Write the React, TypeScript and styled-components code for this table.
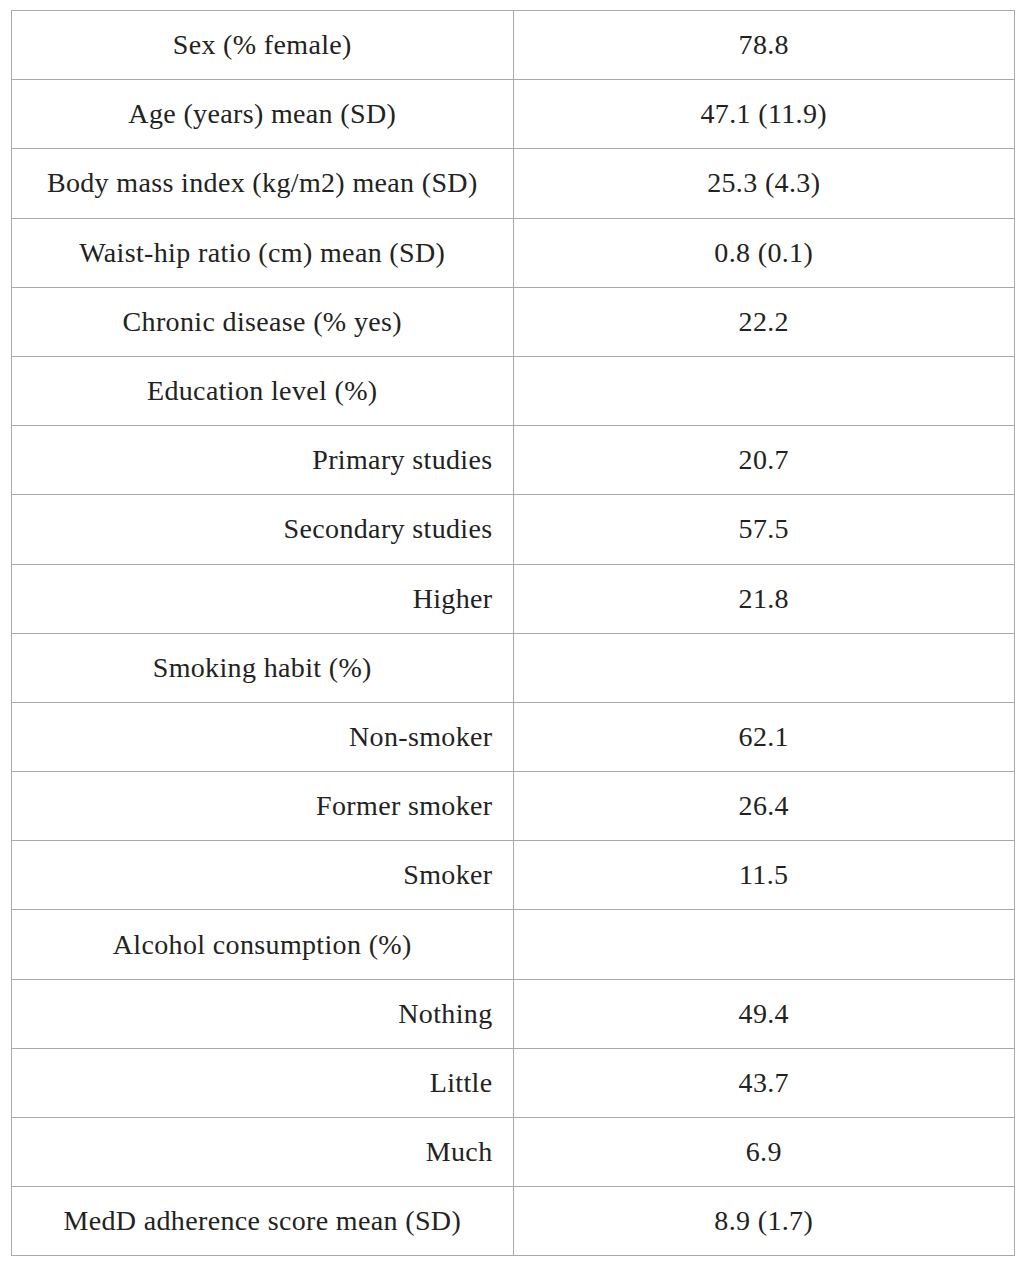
import styled, { createGlobalStyle } from 'styled-components';

const GlobalStyle = createGlobalStyle`
  body {
    margin: 0;
    background: #fff;
  }
`;

const Page = styled.main`
  padding: 10px 11px;
`;

const Table = styled.table`
  width: 1004px;
  border-collapse: collapse;
  font-family: 'Liberation Serif', 'Times New Roman', serif;
  font-size: 28px;
  letter-spacing: 0.35px;
  color: #222;
`;

const Row = styled.tr`
  height: 69.2px;
`;

const Cell = styled.td<{ $indent?: boolean }>`
  border: 1px solid #aaa;
  padding: 0 20px;
  text-align: ${(p) => (p.$indent ? 'right' : 'center')};
  vertical-align: middle;
  width: 50%;
`;

type Item = { label: string; value: string; sub?: boolean };

const rows: Item[] = [
  { label: 'Sex (% female)', value: '78.8' },
  { label: 'Age (years) mean (SD)', value: '47.1 (11.9)' },
  { label: 'Body mass index (kg/m2) mean (SD)', value: '25.3 (4.3)' },
  { label: 'Waist-hip ratio (cm) mean (SD)', value: '0.8 (0.1)' },
  { label: 'Chronic disease (% yes)', value: '22.2' },
  { label: 'Education level (%)', value: '' },
  { label: 'Primary studies', value: '20.7', sub: true },
  { label: 'Secondary studies', value: '57.5', sub: true },
  { label: 'Higher', value: '21.8', sub: true },
  { label: 'Smoking habit (%)', value: '' },
  { label: 'Non-smoker', value: '62.1', sub: true },
  { label: 'Former smoker', value: '26.4', sub: true },
  { label: 'Smoker', value: '11.5', sub: true },
  { label: 'Alcohol consumption (%)', value: '' },
  { label: 'Nothing', value: '49.4', sub: true },
  { label: 'Little', value: '43.7', sub: true },
  { label: 'Much', value: '6.9', sub: true },
  { label: 'MedD adherence score mean (SD)', value: '8.9 (1.7)' },
];

const App = () => (
  <Page>
    <GlobalStyle />
    <Table>
      <tbody>
        {rows.map((r) => (
          <Row key={r.label}>
            <Cell $indent={r.sub}>{r.label}</Cell>
            <Cell>{r.value}</Cell>
          </Row>
        ))}
      </tbody>
    </Table>
  </Page>
);

export default App;
